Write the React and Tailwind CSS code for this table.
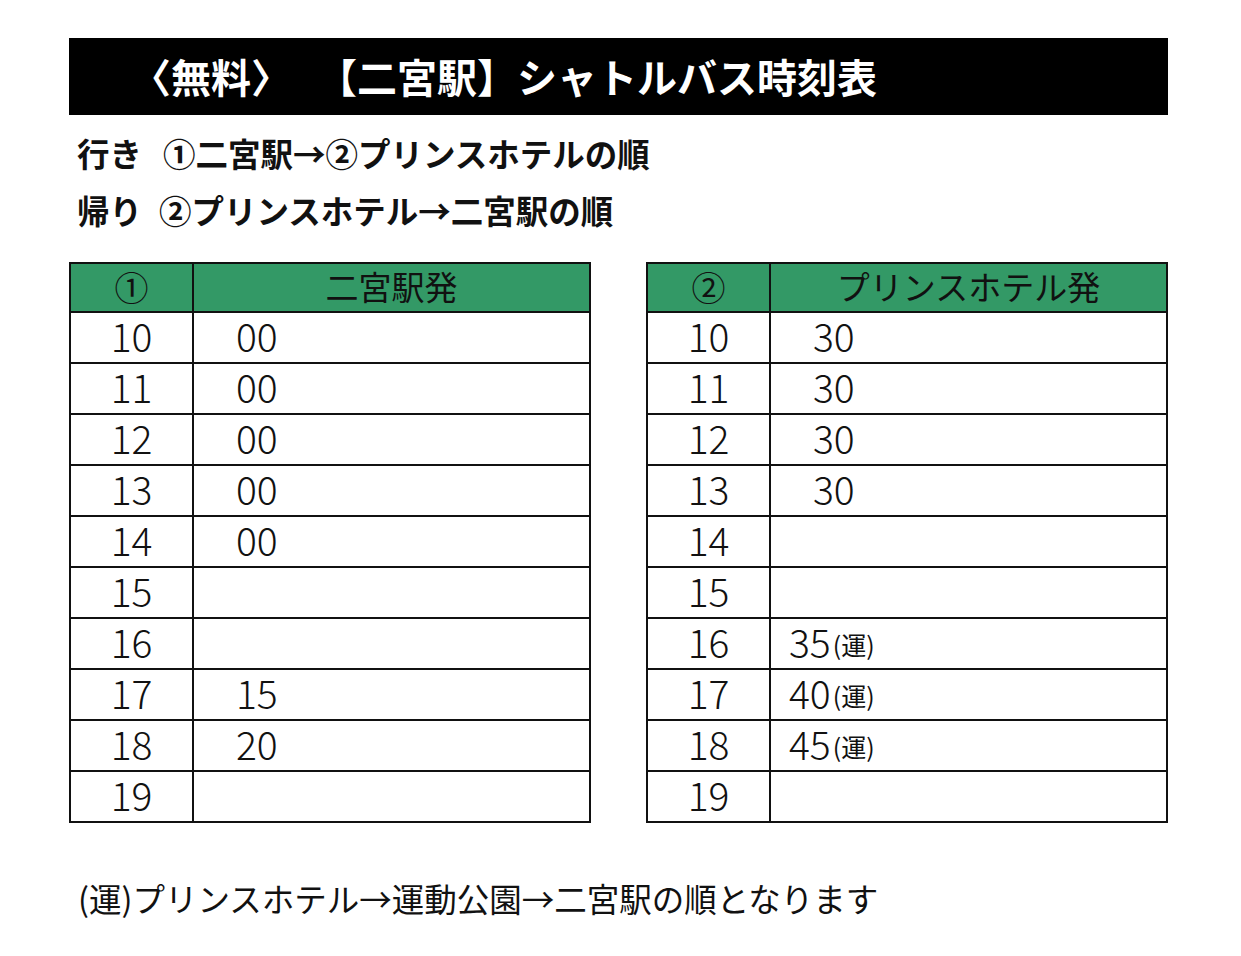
import React from 'react';

const font = { fontFamily: '"Noto Sans CJK JP", "Noto Sans", sans-serif' };

const outbound = [
  ['10', '00'], ['11', '00'], ['12', '00'], ['13', '00'], ['14', '00'],
  ['15', ''], ['16', ''], ['17', '15'], ['18', '20'], ['19', ''],
];

const inbound = [
  ['10', '30'], ['11', '30'], ['12', '30'], ['13', '30'], ['14', ''],
  ['15', ''], ['16', '35', true], ['17', '40', true], ['18', '45', true], ['19', ''],
];

function Timetable({ mark, title, rows }) {
  return (
    <div className="w-[522px] border-2 border-[#111]">
      <div className="flex h-[49px] bg-[#339966] border-b-2 border-[#111] text-[33px] text-[#111] leading-none">
        <div className="w-[123px] flex items-center justify-center border-r-2 border-[#111] text-[34px] pb-[2px]">{mark}</div>
        <div className="flex-1 flex items-center justify-center pb-[2px]">{title}</div>
      </div>
      {rows.map(([h, m, un], i) => (
        <div
          key={h}
          className={`flex text-[39px] font-light text-[#111] ${i < rows.length - 1 ? 'h-[51px] border-b-2 border-[#111]' : 'h-[49px]'}`}
        >
          <div className="w-[123px] flex items-center justify-center border-r-2 border-[#111] leading-none pb-[5px]">{h}</div>
          <div className={`flex-1 flex items-center leading-none pb-[5px] ${un ? 'pl-[18px]' : 'pl-[42px]'}`}>
            {m}
            {un && <span className="text-[25px] font-normal ml-[2px] pt-[6px]">(運)</span>}
          </div>
        </div>
      ))}
    </div>
  );
}

export default function App() {
  return (
    <div className="w-[1241px] h-[956px] bg-white overflow-hidden" style={font}>
      <div className="ml-[69px] w-[1099px]">
        <div className="mt-[38px] h-[77px] bg-black flex items-center text-white text-[40px] font-bold leading-none whitespace-pre pb-[2px]">
          <span className="ml-[62px]">〈無料〉</span>
          <span className="ml-[26px]">【二宮駅】シャトルバス時刻表</span>
        </div>

        <div className="mt-[18px] pl-[8px] h-[40px] flex items-center text-[32.5px] font-bold text-[#111] leading-none">
          <span>行き</span>
          <span className="ml-[21px]">①二宮駅→②プリンスホテルの順</span>
        </div>
        <div className="mt-[17px] pl-[8px] h-[40px] flex items-center text-[32.5px] font-bold text-[#111] leading-none">
          <span>帰り</span>
          <span className="ml-[17px]">②プリンスホテル→二宮駅の順</span>
        </div>

        <div className="mt-[32px] flex justify-between">
          <Timetable mark="①" title="二宮駅発" rows={outbound} />
          <Timetable mark="②" title="プリンスホテル発" rows={inbound} />
        </div>

        <div className="mt-[55px] pl-[9px] h-[40px] flex items-center text-[32.5px] text-[#111] leading-none">
          (運)プリンスホテル→運動公園→二宮駅の順となります
        </div>
      </div>
    </div>
  );
}
